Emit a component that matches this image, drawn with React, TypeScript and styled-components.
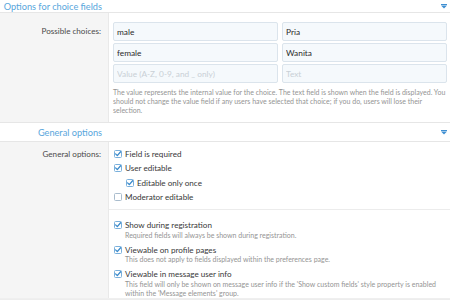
import styled, { createGlobalStyle } from "styled-components";

const GlobalStyle = createGlobalStyle`
  html, body {
    margin: 0;
    padding: 0;
    background: #ffffff;
  }
  body {
    font-family: Lato, "Open Sans", sans-serif;
    color: #141414;
  }
`;

type CheckProps = {
  checked: boolean;
};

const CheckBox = ({ checked }: CheckProps) => (
  <BoxSvg width="8" height="8" viewBox="0 0 8 8">
    <rect
      x="0.5"
      y="0.5"
      width="7"
      height="7"
      rx="1"
      fill="#ffffff"
      stroke={checked ? "#7ab0dc" : "#a9bccd"}
    />
    {checked && (
      <path
        d="M1.6 3.9 L3.3 5.6 L6.6 1.8"
        fill="none"
        stroke="#3a8acb"
        strokeWidth="1.3"
        strokeLinecap="round"
        strokeLinejoin="round"
      />
    )}
  </BoxSvg>
);

const Caret = () => (
  <svg width="6" height="5" viewBox="0 0 6 5">
    <rect x="0" y="0" width="6" height="1" fill="#3f8fd2" />
    <path d="M0 1.5 H6 L3 4.5 Z" fill="#3f8fd2" />
  </svg>
);

type OptionProps = {
  label: string;
  checked: boolean;
  hint?: string;
  nested?: boolean;
};

const Option = ({ label, checked, hint, nested }: OptionProps) => (
  <OptionItem $nested={nested}>
    <OptionLine>
      <CheckBox checked={checked} />
      <span>{label}</span>
    </OptionLine>
    {hint && <OptionHint>{hint}</OptionHint>}
  </OptionItem>
);

const choices = [
  { value: "male", text: "Pria" },
  { value: "female", text: "Wanita" },
];

export default function App() {
  return (
    <Page>
      <GlobalStyle />
      <FormHeader $first>
        <HeaderTitle>Options for choice fields</HeaderTitle>
        <HeaderToggle>
          <Caret />
        </HeaderToggle>
      </FormHeader>

      <FormRow>
        <RowLabel>Possible choices:</RowLabel>
        <RowValue>
          <ChoiceGrid>
            {choices.flatMap((c) => [
              <ChoiceInput key={c.value + "-v"} value={c.value} readOnly />,
              <ChoiceInput key={c.value + "-t"} value={c.text} readOnly />,
            ])}
            <ChoiceInput placeholder="Value (A-Z, 0-9, and _ only)" />
            <ChoiceInput placeholder="Text" />
          </ChoiceGrid>
          <Explain>
            The value represents the internal value for the choice. The text
            field is shown when the field is displayed. You should not change
            the value field if any users have selected that choice; if you do,
            users will lose their selection.
          </Explain>
        </RowValue>
      </FormRow>

      <FormHeader>
        <HeaderTitle>General options</HeaderTitle>
        <HeaderToggle>
          <Caret />
        </HeaderToggle>
      </FormHeader>

      <FormRow $grow>
        <RowLabel $tight>General options:</RowLabel>
        <RowValue $tight>
          <OptionList>
            <Option label="Field is required" checked />
            <Option label="User editable" checked />
            <Option label="Editable only once" checked nested />
            <Option label="Moderator editable" checked={false} />
          </OptionList>
          <Divider />
          <OptionList $spaced>
            <Option
              label="Show during registration"
              checked
              hint="Required fields will always be shown during registration."
            />
            <Option
              label="Viewable on profile pages"
              checked
              hint="This does not apply to fields displayed within the preferences page."
            />
            <Option
              label="Viewable in message user info"
              checked
              hint="This field will only be shown on message user info if the 'Show custom fields' style property is enabled within the 'Message elements' group."
            />
          </OptionList>
        </RowValue>
      </FormRow>
      <FooterShade />
    </Page>
  );
}

const Page = styled.div`
  width: 450px;
  height: 300px;
  overflow: hidden;
  display: flex;
  flex-direction: column;
  background: #ffffff;
`;

const FormHeader = styled.div<{ $first?: boolean }>`
  display: grid;
  grid-template-columns: 109px 1fr;
  align-items: center;
  height: ${(p) => (p.$first ? "12px" : "18px")};
  flex-shrink: 0;
  border-top: ${(p) => (p.$first ? "none" : "1px solid #e6e6e6")};
  border-bottom: 1px solid #e6e6e6;
  background: #ffffff;
`;

const HeaderTitle = styled.div`
  text-align: right;
  padding-right: 7px;
  font-size: 9.2px;
  line-height: 11px;
  color: #58a6dc;
  white-space: nowrap;
`;

const HeaderToggle = styled.div`
  display: flex;
  justify-content: flex-end;
  padding-right: 3px;
  line-height: 0;
`;

const FormRow = styled.div<{ $grow?: boolean }>`
  display: grid;
  grid-template-columns: 109px 1fr;
  flex-grow: ${(p) => (p.$grow ? 1 : 0)};
  flex-shrink: 0;
`;

const RowLabel = styled.div<{ $tight?: boolean }>`
  background: #f5f5f5;
  border-right: 1px solid #e9e9e9;
  text-align: right;
  padding: ${(p) => (p.$tight ? "5px 7px 0 0" : "9px 7px 0 0")};
  line-height: ${(p) => (p.$tight ? "14px" : "19px")};
  font-size: 8.1px;
  color: #4a4a4a;
`;

const RowValue = styled.div<{ $tight?: boolean }>`
  padding: ${(p) => (p.$tight ? "5px 3px 0 5px" : "9px 3px 7px 4px")};
`;

const ChoiceGrid = styled.div`
  display: grid;
  grid-template-columns: 1fr 1fr;
  column-gap: 4px;
  row-gap: 2px;
`;

const ChoiceInput = styled.input`
  box-sizing: border-box;
  height: 19px;
  width: 100%;
  min-width: 0;
  margin: 0;
  padding: 0 3px;
  border: 1px solid #dbe4ec;
  border-radius: 2px;
  background: #f5f9fc;
  font-family: inherit;
  font-size: 8.3px;
  color: #2a2a2a;
  outline: none;

  &::placeholder {
    color: #c9d0d6;
  }
`;

const Explain = styled.div`
  margin-top: 5px;
  font-size: 7px;
  line-height: 9px;
  color: #949494;
`;

const OptionList = styled.div<{ $spaced?: boolean }>`
  display: flex;
  flex-direction: column;
  gap: ${(p) => (p.$spaced ? "2.5px" : "0")};
`;

const OptionItem = styled.div<{ $nested?: boolean }>`
  padding-left: ${(p) => (p.$nested ? "12px" : "0")};
`;

const OptionLine = styled.div`
  display: flex;
  align-items: center;
  gap: 3px;
  height: 14.3px;
  font-size: 8.1px;
  color: #383838;
  white-space: nowrap;
`;

const BoxSvg = styled.svg`
  flex-shrink: 0;
`;

const OptionHint = styled.div`
  padding-left: 11px;
  margin-top: -1.5px;
  font-size: 7px;
  line-height: 9px;
  color: #949494;
`;

const Divider = styled.div`
  height: 1px;
  background: #ececec;
  margin: 5px -3px 8px -5px;
`;

const FooterShade = styled.div`
  height: 5px;
  flex-shrink: 0;
  background: linear-gradient(#f0f0f0, #e6e6e6);
`;
